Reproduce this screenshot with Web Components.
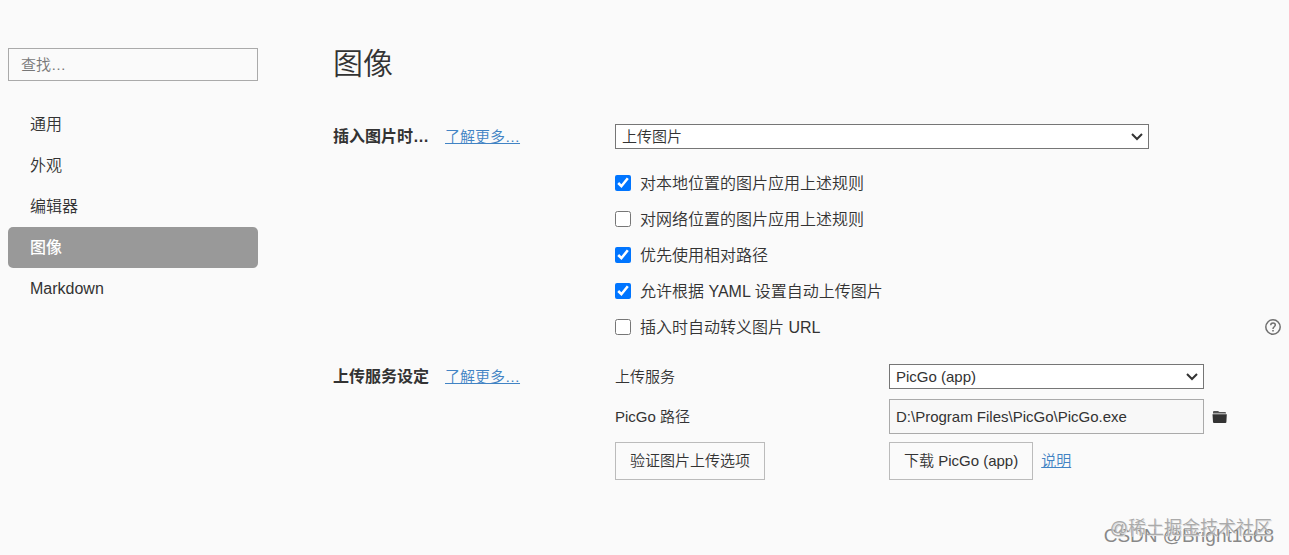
<!DOCTYPE html>
<html lang="zh-CN">
<head>
<meta charset="utf-8">
<meta name="viewport" content="width=device-width, initial-scale=1">
<title>图像</title>
<style>
  html { background: #fafafa; }
  body { margin: 0; font-family: "Liberation Sans", "Noto Sans CJK SC", sans-serif; font-size: 15px; font-weight: 350; line-height: 20px; color: #333; }
</style>
</head>
<body>
<prefs-page>
  <prefs-nav slot="nav">
    <nav-item>通用</nav-item>
    <nav-item>外观</nav-item>
    <nav-item>编辑器</nav-item>
    <nav-item active>图像</nav-item>
    <nav-item>Markdown</nav-item>
  </prefs-nav>
  <prefs-section heading="插入图片时…">
    <select-box class="wide" label="插入图片时">上传图片</select-box>
    <check-list>
      <check-row checked>对本地位置的图片应用上述规则</check-row>
      <check-row>对网络位置的图片应用上述规则</check-row>
      <check-row checked>优先使用相对路径</check-row>
      <check-row checked>允许根据 YAML 设置自动上传图片</check-row>
      <check-row help>插入时自动转义图片 URL</check-row>
    </check-list>
  </prefs-section>
  <prefs-section heading="上传服务设定">
    <upload-settings></upload-settings>
  </prefs-section>
  <page-marks slot="marks"></page-marks>
</prefs-page>
<script>
const define = (name, html, setup) => customElements.define(name, class extends HTMLElement {
  connectedCallback() {
    if (this.shadowRoot) return;
    const root = this.attachShadow({ mode: "open" });
    const t = document.createElement("template");
    t.innerHTML = html;
    root.append(t.content.cloneNode(true));
    if (setup) setup(this, root);
  }
});

define("prefs-page", `
<style>
  :host { display: block; position: relative; box-sizing: border-box; min-height: 100vh; }
  .layout { display: grid; grid-template-columns: 250px minmax(0, 1fr); column-gap: 75px; padding: 44px 8px 40px; }
  aside { padding-top: 4px; }
  h1 { margin: 0 0 40px; font-size: 30px; line-height: 40px; font-weight: 350; }
</style>
<div class="layout">
  <aside><slot name="nav"></slot></aside>
  <main><h1>图像</h1><slot></slot></main>
</div>
<slot name="marks"></slot>`);

define("prefs-nav", `
<style>
  :host { display: block; }
  input { display: block; box-sizing: border-box; width: 100%; height: 33px; margin: 0 0 23px; padding: 0 12px; border: 1px solid #aaa; border-radius: 0; background: transparent; font: inherit; color: inherit; }
  input::placeholder { color: #777; }
</style>
<input type="text" placeholder="查找…" aria-label="查找">
<nav><slot></slot></nav>`);

define("nav-item", `
<style>
  :host { display: block; }
  a { display: block; padding: 0 22px; font-size: 16px; line-height: 41px; border-radius: 5px; color: inherit; text-decoration: none; }
  :host([active]) a { background: #999; color: #fff; font-weight: 500; }
</style>
<a href="#"><slot></slot></a>`);

define("prefs-section", `
<style>
  :host { display: grid; grid-template-columns: 282px minmax(0, 1fr); margin-bottom: 19px; }
  header { display: flex; align-items: center; gap: 16px; height: 25px; }
  h2 { margin: 0; font-size: 16px; line-height: 25px; font-weight: 600; color: #333; }
  a { color: #4183c4; text-decoration: underline; }
</style>
<header><h2></h2><a href="#">了解更多…</a></header>
<div><slot></slot></div>`,
(host, root) => { root.querySelector("h2").textContent = host.getAttribute("heading"); });

define("select-box", `
<style>
  :host { display: block; position: relative; }
  :host(.wide) { margin-right: 132px; }
  select { appearance: none; display: block; box-sizing: border-box; width: 100%; height: 25px; margin: 0; padding: 0 24px 0 6px; border: 1px solid #767676; border-radius: 0; background-color: #fff; font: inherit; color: inherit; }
  svg { position: absolute; right: 6px; top: 7px; width: 12px; height: 12px; pointer-events: none; }
</style>
<select><option></option></select>
<svg viewBox="0 0 12 12" fill="none" stroke="#333" stroke-width="2"><path d="M1 3l5 5 5-5"/></svg>`,
(host, root) => {
  root.querySelector("select").setAttribute("aria-label", host.getAttribute("label"));
  root.querySelector("option").textContent = host.textContent.trim();
});

define("check-list", `
<style>:host { display: block; padding-top: 16px; }</style>
<slot></slot>`);

define("check-row", `
<style>
  :host { display: flex; align-items: center; justify-content: space-between; height: 36px; }
  label { display: flex; align-items: center; gap: 9px; font-size: 16px; }
  span { padding-top: 2px; }
  input { width: 16px; height: 16px; margin: 0; }
  svg { display: none; width: 16px; height: 16px; }
  :host([help]) svg { display: block; }
</style>
<label><input type="checkbox"><span><slot></slot></span></label>
<svg viewBox="0 0 16 16" fill="none" stroke="#707070" role="img" aria-label="帮助">
  <circle cx="8" cy="8" r="7.2" stroke-width="1.5"/>
  <path d="M5.7 6.3C5.7 4.9 6.7 4 8 4s2.3.9 2.3 2.1c0 1.6-2.3 1.8-2.3 3.8" stroke-width="1.5"/>
  <path d="M8 11v1.6" stroke-width="1.6"/>
</svg>`,
(host, root) => { root.querySelector("input").checked = host.hasAttribute("checked"); });

define("upload-settings", `
<style>
  :host { display: block; }
  .row { display: grid; grid-template-columns: 274px minmax(0, 1fr) 77px; align-items: center; }
  .path { margin: 10px 0 8px; }
  .path input { box-sizing: border-box; width: 100%; height: 35px; margin: 0; padding: 0 6px; border: 1px solid #aaa; border-radius: 0; background: #f8f8f8; font: inherit; color: inherit; }
  button { box-sizing: border-box; height: 38px; padding: 0 14px; border: 1px solid #bbb; background: transparent; font: inherit; color: inherit; white-space: nowrap; }
  .icon { display: block; width: 16px; height: 16px; margin-left: 8px; padding: 0; border: 0; }
  .icon svg { display: block; width: 16px; height: 16px; }
  .actions { display: flex; align-items: center; gap: 8px; }
  a { color: #4183c4; text-decoration: underline; }
</style>
<div class="row"><span>上传服务</span><select-box label="上传服务">PicGo (app)</select-box></div>
<div class="row path">
  <label for="path">PicGo 路径</label>
  <input id="path" type="text" value="D:\\Program Files\\PicGo\\PicGo.exe">
  <button class="icon" aria-label="选择文件">
    <svg viewBox="0 0 16 16"><path d="M1 3Q1 2 2 2h4l1.5 1H13q1 0 1 1v.5H1z" fill="#555"/><path d="M.5 5.2h14.3L14.4 13q0 1-1 1H2q-1 0-1-1z" fill="#333"/></svg>
  </button>
</div>
<div class="row">
  <div><button>验证图片上传选项</button></div>
  <div class="actions"><button>下载 PicGo (app)</button><a href="#">说明</a></div>
</div>`);

define("page-marks", `
<style>
  :host { position: absolute; right: 15px; bottom: 7px; text-align: right; pointer-events: none; white-space: nowrap; }
  span { display: block; }
  .a { position: absolute; right: 2px; bottom: 8px; font-size: 18px; line-height: 24px; color: #aaa; text-shadow: 1px 1px 0 #ddd; }
  .b { font-size: 19px; line-height: 24px; color: #888; }
</style>
<span class="b">CSDN @Bright1668</span>
<span class="a">@稀土掘金技术社区</span>`);
</script>
</body>
</html>
